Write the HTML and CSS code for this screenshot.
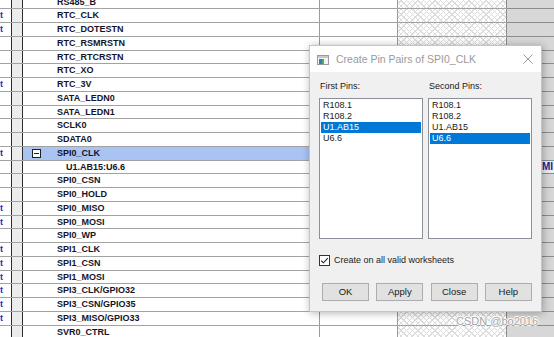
FILE: index.html
```html
<!DOCTYPE html>
<html>
<head>
<meta charset="utf-8">
<link rel="stylesheet" href="styles.css">
</head>
<body>
<div class="sheet">
  <div class="row"><div class="ca"></div><div class="cb"></div><div class="cn">RS485_B</div><div class="cd"></div><div class="ch"></div><div class="cg"></div></div>
  <div class="row"><div class="ca">t</div><div class="cb"></div><div class="cn">RTC_CLK</div><div class="cd"></div><div class="ch"></div><div class="cg"></div></div>
  <div class="row"><div class="ca">t</div><div class="cb"></div><div class="cn">RTC_DOTESTN</div><div class="cd"></div><div class="ch"></div><div class="cg"></div></div>
  <div class="row"><div class="ca"></div><div class="cb"></div><div class="cn">RTC_RSMRSTN</div><div class="cd"></div><div class="ch"></div><div class="cg"></div></div>
  <div class="row"><div class="ca"></div><div class="cb"></div><div class="cn">RTC_RTCRSTN</div><div class="cd"></div><div class="ch"></div><div class="cg"></div></div>
  <div class="row"><div class="ca"></div><div class="cb"></div><div class="cn">RTC_XO</div><div class="cd"></div><div class="ch"></div><div class="cg"></div></div>
  <div class="row"><div class="ca">t</div><div class="cb"></div><div class="cn">RTC_3V</div><div class="cd"></div><div class="ch"></div><div class="cg"></div></div>
  <div class="row"><div class="ca"></div><div class="cb"></div><div class="cn">SATA_LEDN0</div><div class="cd"></div><div class="ch"></div><div class="cg"></div></div>
  <div class="row"><div class="ca"></div><div class="cb"></div><div class="cn">SATA_LEDN1</div><div class="cd"></div><div class="ch"></div><div class="cg"></div></div>
  <div class="row"><div class="ca"></div><div class="cb"></div><div class="cn">SCLK0</div><div class="cd"></div><div class="ch"></div><div class="cg"></div></div>
  <div class="row"><div class="ca"></div><div class="cb"></div><div class="cn">SDATA0</div><div class="cd"></div><div class="ch"></div><div class="cg"></div></div>
  <div class="row"><div class="ca">t</div><div class="cb"></div><div class="cn sel"><span class="tog"></span>SPI0_CLK</div><div class="cd"></div><div class="ch"></div><div class="cg"></div></div>
  <div class="row"><div class="ca"></div><div class="cb"></div><div class="cn sub">U1.AB15:U6.6</div><div class="cd"></div><div class="ch"></div><div class="cg lit">MI</div></div>
  <div class="row"><div class="ca"></div><div class="cb"></div><div class="cn">SPI0_CSN</div><div class="cd"></div><div class="ch"></div><div class="cg"></div></div>
  <div class="row"><div class="ca"></div><div class="cb"></div><div class="cn">SPI0_HOLD</div><div class="cd"></div><div class="ch"></div><div class="cg"></div></div>
  <div class="row"><div class="ca">t</div><div class="cb"></div><div class="cn">SPI0_MISO</div><div class="cd"></div><div class="ch"></div><div class="cg"></div></div>
  <div class="row"><div class="ca">t</div><div class="cb"></div><div class="cn">SPI0_MOSI</div><div class="cd"></div><div class="ch"></div><div class="cg"></div></div>
  <div class="row"><div class="ca"></div><div class="cb"></div><div class="cn">SPI0_WP</div><div class="cd"></div><div class="ch"></div><div class="cg"></div></div>
  <div class="row"><div class="ca">t</div><div class="cb"></div><div class="cn">SPI1_CLK</div><div class="cd"></div><div class="ch"></div><div class="cg"></div></div>
  <div class="row"><div class="ca">t</div><div class="cb"></div><div class="cn">SPI1_CSN</div><div class="cd"></div><div class="ch"></div><div class="cg"></div></div>
  <div class="row"><div class="ca">t</div><div class="cb"></div><div class="cn">SPI1_MOSI</div><div class="cd"></div><div class="ch"></div><div class="cg"></div></div>
  <div class="row"><div class="ca">t</div><div class="cb"></div><div class="cn">SPI3_CLK/GPIO32</div><div class="cd"></div><div class="ch"></div><div class="cg"></div></div>
  <div class="row"><div class="ca">t</div><div class="cb"></div><div class="cn">SPI3_CSN/GPIO35</div><div class="cd"></div><div class="ch"></div><div class="cg"></div></div>
  <div class="row"><div class="ca">t</div><div class="cb"></div><div class="cn">SPI3_MISO/GPIO33</div><div class="cd"></div><div class="ch"></div><div class="cg"></div></div>
  <div class="row"><div class="ca"></div><div class="cb"></div><div class="cn">SVR0_CTRL</div><div class="cd"></div><div class="ch"></div><div class="cg"></div></div>
</div>

<div class="dialog">
  <div class="titlebar">
    <svg class="appicon" width="12" height="10" viewBox="0 0 12 10">
      <rect x="0.5" y="0.5" width="11" height="9" fill="#f4f4f4" stroke="#9a9a9a"/>
      <rect x="1" y="1" width="10" height="2" fill="#c9c9c9"/>
      <rect x="2" y="4" width="3" height="5" fill="#2f7fc8"/>
      <rect x="5" y="4" width="2" height="5" fill="#4caf50"/>
    </svg>
    <span class="title">Create Pin Pairs of SPI0_CLK</span>
    <svg class="close" width="10" height="10" viewBox="0 0 10 10">
      <path d="M0.5 0.5 L9.5 9.5 M9.5 0.5 L0.5 9.5" stroke="#9a9a9a" stroke-width="1" fill="none"/>
    </svg>
  </div>
  <div class="body">
    <div class="lists">
      <div class="col">
        <div class="label">First Pins:</div>
        <div class="listbox">
          <div class="item">R108.1</div>
          <div class="item">R108.2</div>
          <div class="item on">U1.AB15</div>
          <div class="item">U6.6</div>
        </div>
      </div>
      <div class="col">
        <div class="label">Second Pins:</div>
        <div class="listbox">
          <div class="item">R108.1</div>
          <div class="item">R108.2</div>
          <div class="item">U1.AB15</div>
          <div class="item on">U6.6</div>
        </div>
      </div>
    </div>
    <div class="check">
      <svg class="box" width="11" height="11" viewBox="0 0 11 11">
        <rect x="0.5" y="0.5" width="10" height="10" fill="#fff" stroke="#333"/>
        <path d="M2.2 5.6 L4.4 7.8 L8.8 3.2" stroke="#222" stroke-width="1.1" fill="none"/>
      </svg>
      <span>Create on all valid worksheets</span>
    </div>
    <div class="buttons">
      <div class="btn">OK</div>
      <div class="btn">Apply</div>
      <div class="btn">Close</div>
      <div class="btn">Help</div>
    </div>
  </div>
</div>

<div class="watermark">CSDN @bo2016</div>
</body>
</html>
```
FILE: styles.css
```css
html, body {
  margin: 0;
  padding: 0;
  width: 554px;
  height: 337px;
  overflow: hidden;
  background: #fff;
}

.sheet {
  margin-top: -4.45px;
  display: flex;
  flex-direction: column;
  font-family: "Liberation Sans", Arial, sans-serif;
  font-weight: bold;
  font-size: 9px;
  color: #14142a;
}

.row {
  display: flex;
  height: 13.75px;
  box-sizing: border-box;
  border-bottom: 1px solid #a2a2a2;
  line-height: 12.75px;
}

.ca {
  width: 12px;
  box-sizing: border-box;
  border-right: 1px solid #2c2c2c;
  color: #1530c0;
  text-align: left;
  overflow: hidden;
  padding-left: 0;
}

.cb {
  width: 11px;
  box-sizing: border-box;
  background: #ececec;
  border-right: 1px solid #2c2c2c;
}

.cn {
  width: 297px;
  box-sizing: border-box;
  padding-left: 34px;
  border-right: 1px solid #9a9a9a;
  white-space: nowrap;
  position: relative;
}

.cn.sel {
  background: #a9c3f2;
}

.cn.sub {
  padding-left: 43px;
}

.tog {
  position: absolute;
  left: 9px;
  top: 2px;
  width: 9px;
  height: 9px;
  box-sizing: border-box;
  border: 1px solid #222;
  background: #fff;
}

.tog::after {
  content: "";
  position: absolute;
  left: 1px;
  right: 1px;
  top: 3px;
  height: 1px;
  background: #222;
}

.cd {
  width: 78px;
  box-sizing: border-box;
  border-right: 1px solid #9a9a9a;
}

.ch {
  width: 109px;
  box-sizing: border-box;
  border-right: 1px solid #8a8a8a;
  background:
    repeating-linear-gradient(45deg, transparent 0 3px, #dcdcdc 3px 4px),
    repeating-linear-gradient(-45deg, transparent 0 3px, #dcdcdc 3px 4px),
    #fff;
}

.cg {
  flex: 1;
  background: #d7d7d7;
  border-bottom: 0;
}

.row .cg {
  box-shadow: 0 1px 0 #8c8c8c;
}

.cg.lit {
  background: #ececf2;
  color: #1c1c90;
  padding-left: 35px;
  font-size: 10px;
}

/* dialog */
.dialog {
  position: absolute;
  left: 309px;
  top: 45px;
  width: 233px;
  height: 267px;
  box-sizing: border-box;
  border: 1px solid #c4c4c4;
  background: #f0f0f0;
  box-shadow: 1px 1px 8px rgba(0, 0, 0, 0.3);
  display: flex;
  flex-direction: column;
  font-family: "Liberation Sans", Arial, sans-serif;
  font-size: 9px;
  color: #1a1a1a;
}

.titlebar {
  height: 26px;
  background: #fff;
  display: flex;
  align-items: center;
  padding-left: 7px;
  padding-right: 8px;
  flex: none;
}

.appicon {
  flex: none;
  margin-top: 1px;
}

.title {
  margin-left: 7px;
  font-size: 10.5px;
  color: #9a9a9a;
  flex: 1;
  white-space: nowrap;
}

.close {
  flex: none;
}

.body {
  flex: 1;
  padding: 9px 8px 0 9px;
  display: flex;
  flex-direction: column;
}

.lists {
  display: grid;
  grid-template-columns: 104px 104px;
  column-gap: 5px;
}

.label {
  line-height: 11px;
  height: 11px;
  padding-left: 1px;
  margin-bottom: 6px;
}

.listbox {
  height: 141px;
  box-sizing: border-box;
  border: 1px solid #8a8f98;
  background: #fff;
  padding: 1px 1px;
}

.item {
  height: 11px;
  line-height: 11px;
  padding-left: 2px;
  white-space: nowrap;
}

.item.on {
  background: #0078d7;
  color: #fff;
}

.check {
  margin-top: 16px;
  display: flex;
  align-items: center;
  height: 11px;
}

.check .box {
  flex: none;
}

.check span {
  margin-left: 4px;
  line-height: 11px;
}

.buttons {
  margin-top: 17px;
  padding-left: 3px;
  display: flex;
  column-gap: 7.3px;
}

.btn {
  width: 47px;
  height: 18px;
  box-sizing: border-box;
  border: 1px solid #adadad;
  background: #e1e1e1;
  text-align: center;
  line-height: 16px;
  font-size: 9.5px;
}

.watermark {
  position: absolute;
  left: 456px;
  top: 315px;
  font-family: "Liberation Sans", Arial, sans-serif;
  font-size: 11px;
  color: #a4a4a4;
  text-shadow: 1px 0 0 #fff, -1px 0 0 #fff, 0 1px 0 #fff, 0 -1px 0 #fff;
  white-space: nowrap;
}
```
